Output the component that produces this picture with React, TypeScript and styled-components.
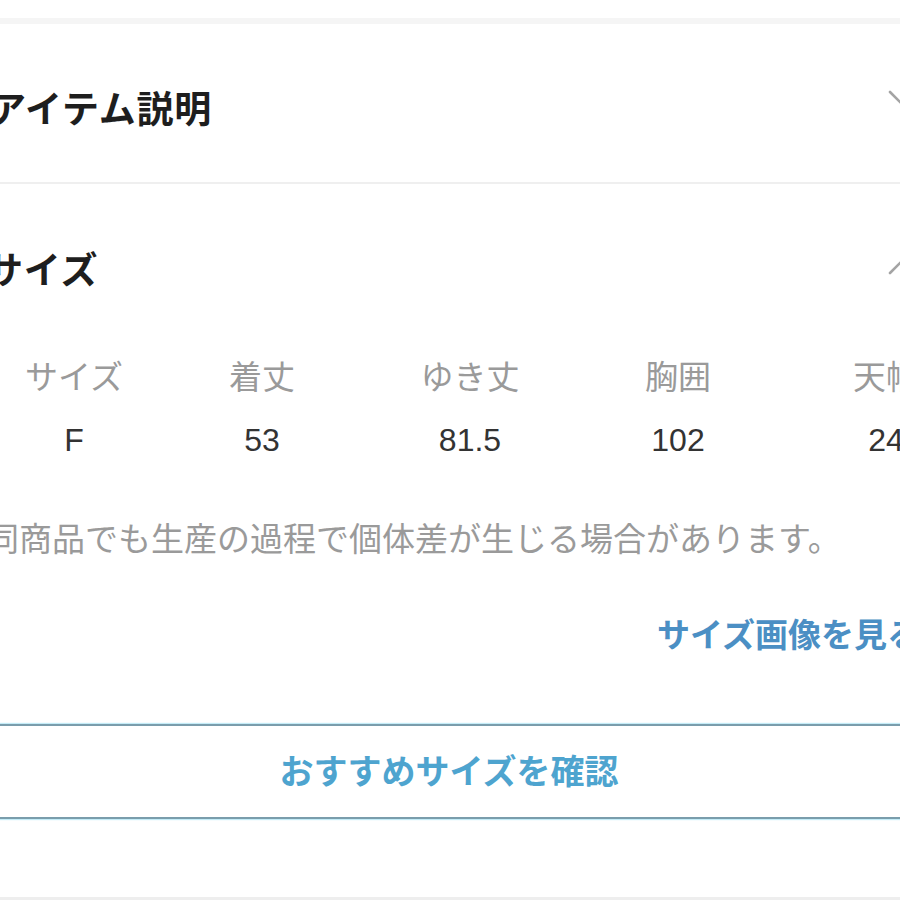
import styled, { createGlobalStyle } from "styled-components";

const GlobalStyle = createGlobalStyle`
  html, body {
    margin: 0;
    padding: 0;
    background: #fff;
  }
  body {
    font-family: "Liberation Sans", "Noto Sans CJK JP", sans-serif;
  }
`;

const Viewport = styled.div`
  width: 900px;
  height: 900px;
  overflow: hidden;
  background: #fff;
`;

const Sheet = styled.div`
  width: 930px;
  margin-left: -10px;
  padding-top: 18px;
`;

const Band = styled.div`
  height: 6px;
  background: #f5f5f5;
`;

const Header = styled.div<{ $top: number; $bottom: number; $divider?: boolean }>`
  display: flex;
  justify-content: space-between;
  align-items: flex-start;
  padding: ${(p) => p.$top}px 0 ${(p) => p.$bottom}px;
  border-bottom: ${(p) => (p.$divider ? "2px solid #efefef" : "none")};
`;

const Title = styled.h2<{ $shift?: number }>`
  margin: 0 0 0 ${(p) => p.$shift ?? 0}px;
  font-size: 37px;
  line-height: 50px;
  font-weight: 700;
  color: #1e1e1e;
  letter-spacing: 0.8px;
`;

const Chevron = styled.svg<{ $offset: number }>`
  width: 30px;
  height: 18px;
  margin-top: ${(p) => p.$offset}px;
  margin-right: 2px;
  flex-shrink: 0;
`;

const Table = styled.div`
  display: grid;
  grid-template-columns: 168px repeat(4, 208px);
  row-gap: 18px;
  margin-top: 58px;
`;

const Cell = styled.div<{ $head?: boolean }>`
  text-align: center;
  white-space: nowrap;
  font-size: ${(p) => (p.$head ? 33 : 32)}px;
  line-height: 45px;
  color: ${(p) => (p.$head ? "#9a9a9a" : "#333")};
`;

const Note = styled.p`
  margin: 54px 0 0 -4px;
  font-size: 33px;
  line-height: 45px;
  color: #9a9a9a;
  white-space: nowrap;
`;

const LinkRow = styled.div`
  margin-top: 51px;
  padding-left: 667px;
  white-space: nowrap;
`;

const TextLink = styled.a`
  font-size: 33px;
  line-height: 45px;
  font-weight: 700;
  color: #4b8fc4;
  text-decoration: none;
`;

const OutlineButton = styled.button`
  display: flex;
  align-items: center;
  justify-content: center;
  width: 100%;
  height: 95px;
  margin-top: 66px;
  padding: 0 12px 4px 0;
  background: #fff;
  border: 2px solid #7a9dac;
  box-shadow: 0 1px 1px #c4ecf7, 0 -1px 1px #c4ecf7;
  font-family: inherit;
  font-size: 34px;
  font-weight: 700;
  color: #4ea4cf;
`;

const BottomBand = styled.div`
  height: 6px;
  margin-top: 78px;
  background: #eeeeee;
`;

const columns = [
  { label: "サイズ", value: "F" },
  { label: "着丈", value: "53" },
  { label: "ゆき丈", value: "81.5" },
  { label: "胸囲", value: "102" },
  { label: "天幅", value: "24" },
];

function ChevronIcon({ up, offset }: { up?: boolean; offset: number }) {
  return (
    <Chevron viewBox="0 0 30 18" $offset={offset}>
      <path
        d={up ? "M2 16 L15 3 L28 16" : "M2 2 L15 15 L28 2"}
        fill="none"
        stroke="#a4a4a4"
        strokeWidth="2.6"
        strokeLinecap="round"
        strokeLinejoin="round"
      />
    </Chevron>
  );
}

export default function App() {
  return (
    <Viewport>
      <GlobalStyle />
      <Sheet>
        <Band />
        <Header $top={62} $bottom={46} $divider>
          <Title $shift={-1}>アイテム説明</Title>
          <ChevronIcon offset={4} />
        </Header>
        <Header $top={63} $bottom={0}>
          <Title $shift={-4}>サイズ</Title>
          <ChevronIcon up offset={10} />
        </Header>
        <Table>
          {columns.map((c) => (
            <Cell key={c.label} $head>
              {c.label}
            </Cell>
          ))}
          {columns.map((c) => (
            <Cell key={c.label + "-v"}>{c.value}</Cell>
          ))}
        </Table>
        <Note>同商品でも生産の過程で個体差が生じる場合があります。</Note>
        <LinkRow>
          <TextLink>サイズ画像を見る</TextLink>
        </LinkRow>
        <OutlineButton>おすすめサイズを確認</OutlineButton>
        <BottomBand />
      </Sheet>
    </Viewport>
  );
}
